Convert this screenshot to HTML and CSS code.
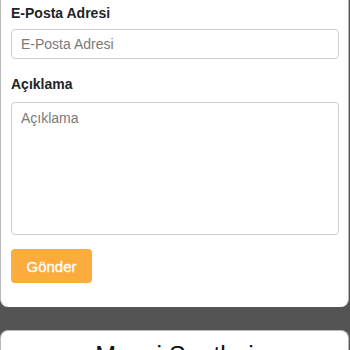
FILE: index.html
```html
<!DOCTYPE html>
<html lang="tr">
<head>
<meta charset="utf-8">
<title>İletişim</title>
<link rel="stylesheet" href="styles.css">
</head>
<body>
<div class="page">
  <section class="card form-card">
    <form class="form">
      <label class="label" for="email">E-Posta Adresi</label>
      <input class="field" id="email" type="email" placeholder="E-Posta Adresi">
      <label class="label label-gap" for="desc">Açıklama</label>
      <textarea class="field area" id="desc" placeholder="Açıklama"></textarea>
      <button class="btn" type="button">Gönder</button>
    </form>
  </section>
  <section class="card hours-card">
    <h2 class="title">Mesai Saatleri</h2>
  </section>
</div>
</body>
</html>
```

FILE: styles.css
```css
html, body {
  margin: 0;
  padding: 0;
}
body {
  background: #545454;
  font-family: "Liberation Sans", Arial, sans-serif;
  color: #212529;
  height: 350px;
  overflow: hidden;
}
.page {
  display: flex;
  flex-direction: column;
  gap: 23px;
  padding-right: 1px;
}
.card {
  background: #fff;
  border-left: 1px solid #b9b9b9;
  border-right: 1px solid #b9b9b9;
}
.form-card {
  border-radius: 0 0 8px 8px;
  padding: 3px 9px 24px 10px;
}
.form {
  display: flex;
  flex-direction: column;
  align-items: flex-start;
}
.label {
  font-size: 14px;
  font-weight: bold;
  line-height: 20px;
  margin-bottom: 6px;
}
.label-gap {
  margin-top: 15px;
  margin-bottom: 8px;
}
.field {
  box-sizing: border-box;
  width: 100%;
  height: 30px;
  border: 1px solid #cfcfcf;
  border-radius: 4px;
  padding: 0 9px;
  font-family: "Liberation Sans", Arial, sans-serif;
  font-size: 14px;
  color: #333;
  background: #fff;
  margin: 0;
  outline: none;
}
.field::placeholder {
  color: #7a7a7a;
  opacity: 1;
}
.area {
  height: 133px;
  padding: 6px 9px;
  resize: none;
  line-height: 18px;
}
.btn {
  margin-top: 14px;
  width: 81px;
  height: 34px;
  border: 0;
  border-radius: 4px;
  background: #fbac3c;
  color: #fff;
  font-family: "Liberation Sans", Arial, sans-serif;
  font-size: 15px;
  font-weight: normal;
  -webkit-text-stroke: 0.3px #fff;
  padding: 0;
}
.hours-card {
  border-top: 1px solid #b9b9b9;
  border-radius: 8px 8px 0 0;
  padding: 9px 10px 20px;
  min-height: 60px;
}
.title {
  margin: 0;
  text-align: center;
  font-size: 25px;
  font-weight: normal;
  line-height: 30px;
  color: #111;
}
```
